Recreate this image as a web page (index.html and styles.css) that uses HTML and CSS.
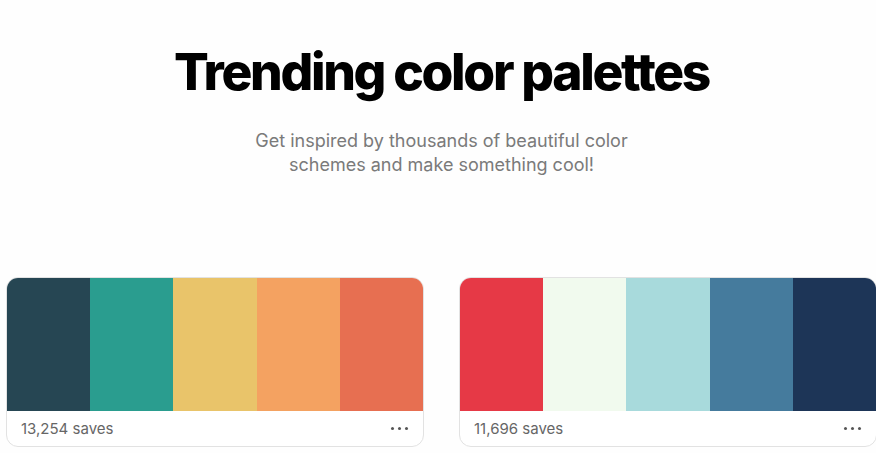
FILE: index.html
```html
<!DOCTYPE html>
<html lang="en">
<head>
<meta charset="utf-8">
<title>Trending color palettes</title>
<link rel="stylesheet" href="styles.css">
</head>
<body>
<main class="page">
  <header class="hero">
    <h1 class="title">Trending color palettes</h1>
    <p class="subtitle">Get inspired by thousands of beautiful color<br>schemes and make something cool!</p>
  </header>
  <section class="grid">
    <article class="card">
      <div class="palette">
        <span class="swatch" style="background:#264653"></span>
        <span class="swatch" style="background:#2a9d8f"></span>
        <span class="swatch" style="background:#e9c46a"></span>
        <span class="swatch" style="background:#f4a261"></span>
        <span class="swatch" style="background:#e76f51"></span>
      </div>
      <div class="footer">
        <span class="saves">13,254 saves</span>
        <span class="more"><i></i><i></i><i></i></span>
      </div>
    </article>
    <article class="card">
      <div class="palette">
        <span class="swatch" style="background:#e63946"></span>
        <span class="swatch" style="background:#f1faee"></span>
        <span class="swatch" style="background:#a8dadc"></span>
        <span class="swatch" style="background:#457b9d"></span>
        <span class="swatch" style="background:#1d3557"></span>
      </div>
      <div class="footer">
        <span class="saves">11,696 saves</span>
        <span class="more"><i></i><i></i><i></i></span>
      </div>
    </article>
  </section>
</main>
</body>
</html>
```

FILE: styles.css
```css
html, body {
  margin: 0;
  padding: 0;
  background: #fefefe;
  overflow: hidden;
}
body {
  font-family: Inter, "Noto Sans", sans-serif;
  color: #000;
}
.page {
  width: 883px;
}
.hero {
  display: flex;
  flex-direction: column;
  align-items: center;
  padding-top: 39px;
}
.title {
  margin: 0;
  font-size: 51.5px;
  font-weight: 800;
  letter-spacing: -0.045em;
  line-height: 64px;
  color: #000;
}
.subtitle {
  margin: 26px 0 0;
  font-size: 18px;
  line-height: 24px;
  color: #7a7a7a;
  text-align: center;
  font-weight: 400;
}
.grid {
  display: grid;
  grid-template-columns: 418px 418px;
  column-gap: 35px;
  padding-left: 6px;
  margin-top: 100px;
}
.card {
  border: 1px solid #e2e2e2;
  border-radius: 12px;
  overflow: hidden;
  background: #fff;
}
.palette {
  display: flex;
  height: 134px;
  margin: -1px -1px 0;
}
.swatch {
  flex: 1;
}
.footer {
  height: 35px;
  display: flex;
  align-items: center;
  justify-content: space-between;
  padding: 0 15px 0 14px;
}
.saves {
  font-size: 15px;
  color: #666;
}
.more {
  display: flex;
  gap: 4px;
}
.more i {
  width: 3px;
  height: 3px;
  border-radius: 50%;
  background: #555;
}
```
